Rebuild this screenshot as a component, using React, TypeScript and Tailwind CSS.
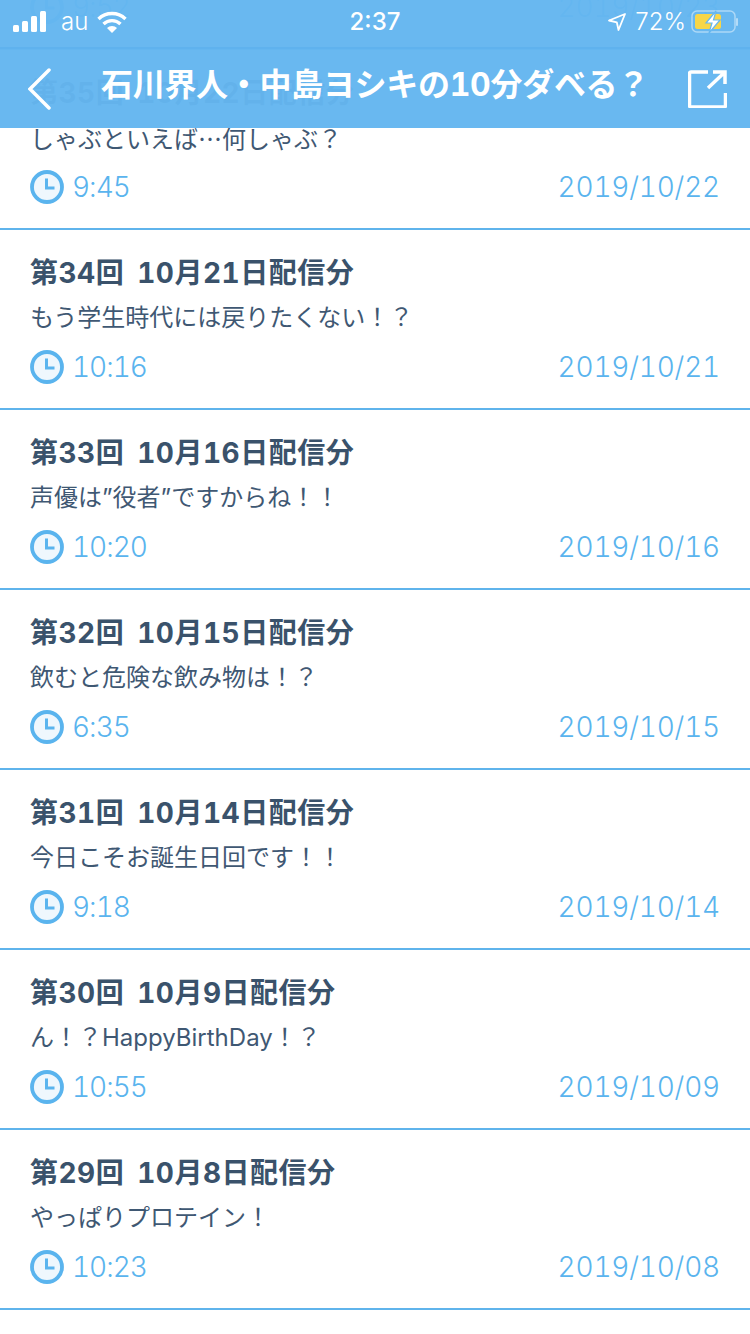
import type { ReactNode } from 'react';

const FONT = "font-['Inter','Noto_Sans_CJK_JP',sans-serif]";

const episodes: { title: string; body: ReactNode; time: string; date: string }[] = [
  { title: '第36回 10月23日配信分', body: '', time: '9:52', date: '2019/10/23' },
  {
    title: '第35回 10月22日配信分',
    body: (
      <>
        しゃぶといえば<span className="font-['Noto_Sans_CJK_JP',sans-serif]">…</span>何しゃぶ？
      </>
    ),
    time: '9:45',
    date: '2019/10/22',
  },
  { title: '第34回 10月21日配信分', body: 'もう学生時代には戻りたくない！？', time: '10:16', date: '2019/10/21' },
  { title: '第33回 10月16日配信分', body: '声優は”役者”ですからね！！', time: '10:20', date: '2019/10/16' },
  { title: '第32回 10月15日配信分', body: '飲むと危険な飲み物は！？', time: '6:35', date: '2019/10/15' },
  { title: '第31回 10月14日配信分', body: '今日こそお誕生日回です！！', time: '9:18', date: '2019/10/14' },
  { title: '第30回 10月9日配信分', body: 'ん！？HappyBirthDay！？', time: '10:55', date: '2019/10/09' },
  { title: '第29回 10月8日配信分', body: 'やっぱりプロテイン！', time: '10:23', date: '2019/10/08' },
];

function Clock() {
  return (
    <svg width="34" height="34" viewBox="0 0 34 34" className="shrink-0">
      <circle cx="17" cy="17" r="15" fill="#eff7fd" stroke="#5ab4ee" strokeWidth="3.800" />
      <path d="M16.500 8.500V18H24.500" fill="none" stroke="#5ab4ee" strokeWidth="3" />
    </svg>
  );
}

function Row({ title, body, time, date }: { title: string; body: ReactNode; time: string; date: string }) {
  return (
    <div className="h-[180px] border-b-2 border-[#5fb4ec] bg-white px-[30px] pt-[24px]">
      <div className="h-[38px] text-[28px] leading-[38px] font-bold tracking-[0.5px] tabular-nums whitespace-nowrap text-[#3a526b] [word-spacing:5px]">{title}</div>
      <div className="mt-[8px] h-[36px] text-[24px] leading-[36px] whitespace-nowrap text-[#3f5873]">{body}</div>
      <div className="mt-[13px] flex h-[36px] items-center justify-between text-[#5ab4ee]">
        <div className="flex items-center gap-[8px]">
          <Clock />
          <span className="text-[28px] leading-[36px] font-light tracking-[-1px] tabular-nums">{time}</span>
        </div>
        <span className="text-[28px] leading-[36px] font-light tracking-[-0.2px] tabular-nums">{date}</span>
      </div>
    </div>
  );
}

function StatusBar() {
  return (
    <div className="relative flex h-[49px] items-center justify-between border-b-2 border-[#5fb2ee] pr-[12px] pb-[4px] pl-[13px] text-white">
      <div className="flex items-center">
        <svg width="34" height="21" viewBox="0 0 34 21">
          <rect x="0" y="14" width="6" height="7" rx="1.500" fill="#fff" />
          <rect x="9" y="10" width="6" height="11" rx="1.500" fill="#fff" />
          <rect x="18" y="5" width="6" height="16" rx="1.500" fill="#fff" />
          <rect x="27" y="0" width="6" height="21" rx="1.500" fill="#fff" />
        </svg>
        <span className="ml-[14px] text-[24px] leading-none font-light">au</span>
        <svg width="30" height="22" viewBox="0 0 30 22" className="ml-[9px]">
          <path d="M1.500 8a19.500 19.500 0 0 1 27 0" fill="none" stroke="#fff" strokeWidth="3.400" />
          <path d="M6.500 13a12.500 12.500 0 0 1 17 0" fill="none" stroke="#fff" strokeWidth="3.400" />
          <path d="M10 17a7 7 0 0 1 10 0l-5 5z" fill="#fff" />
        </svg>
      </div>
      <span className="absolute right-0 left-0 text-center text-[24px] leading-none font-medium">2:37</span>
      <div className="flex items-center">
        <svg width="18" height="18" viewBox="0 0 18 18">
          <path d="M1 7.500 17 1l-6.500 16-1.700-7.700z" fill="none" stroke="#fff" strokeWidth="1.800" strokeLinejoin="round" />
        </svg>
        <span className="ml-[9px] text-[24px] leading-none font-light">72%</span>
        <svg width="48" height="24" viewBox="0 0 48 24" className="ml-[4px]">
          <rect x="2" y="1" width="43" height="21" rx="5" fill="none" stroke="#fff" strokeOpacity="0.45" strokeWidth="1.500" />
          <rect x="46" y="8" width="2" height="8" rx="1" fill="#fff" fillOpacity="0.5" />
          <rect x="5" y="4" width="26" height="15" rx="2.500" fill="#f8d648" />
          <path d="M26 1 16 13h6l-3 10 11-13h-6.500z" fill="#fff" stroke="#66b7f0" strokeWidth="1.200" />
        </svg>
      </div>
    </div>
  );
}

function NavBar() {
  return (
    <div className="relative flex h-[79px] items-center justify-between pr-[23px] pl-[28px]">
      <svg width="24" height="42" viewBox="0 0 24 42" className="mt-[1px]">
        <path d="M21 2 2 21l19 19" fill="none" stroke="#fff" strokeWidth="3.500" strokeLinecap="round" />
      </svg>
      <div className="absolute right-0 left-0 -top-[2px] h-[75px] text-center text-[32px] leading-[75px] font-bold tracking-[-0.3px] tabular-nums whitespace-nowrap text-white">
        石川界人・中島ヨシキの10分ダベる？
      </div>
      <svg width="39" height="38" viewBox="0 0 39 38">
        <path d="M20 2H3a1.500 1.500 0 0 0-1.500 1.500v32A1.500 1.500 0 0 0 3 37h33a1.500 1.500 0 0 0 1.500-1.500V23" fill="none" stroke="#fff" strokeWidth="3.500" />
        <path d="M20 18 37 2M25 2h12v12" fill="none" stroke="#fff" strokeWidth="3.500" />
      </svg>
    </div>
  );
}

export default function App() {
  return (
    <div className={`relative h-[1334px] w-[750px] overflow-hidden bg-white ${FONT}`}>
      <div className="-mt-[130px]">
        {episodes.map((e) => (
          <Row key={e.title} {...e} />
        ))}
      </div>
      <div className="absolute top-0 left-0 h-[128px] w-full bg-[#64b6f0]/[0.97]">
        <StatusBar />
        <NavBar />
      </div>
    </div>
  );
}
